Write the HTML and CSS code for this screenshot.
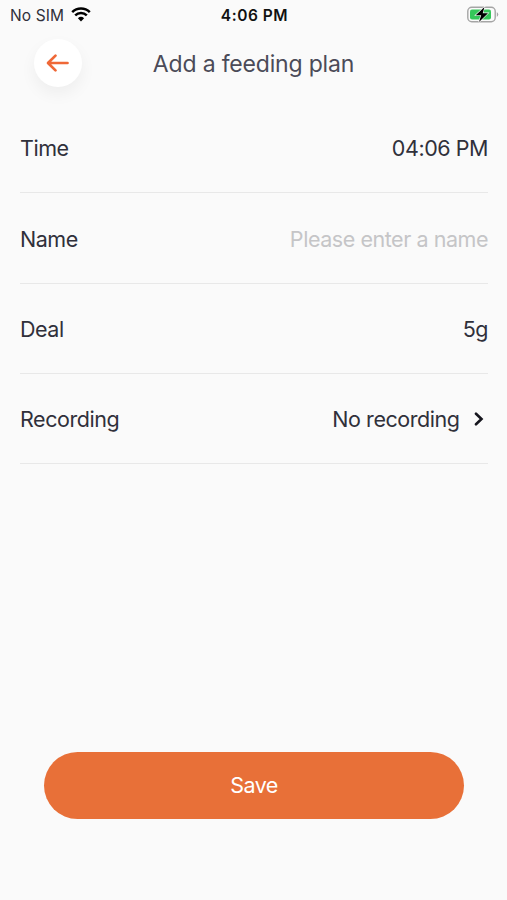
FILE: index.html
```html
<!DOCTYPE html>
<html lang="en">
<head>
<meta charset="utf-8">
<title>Add a feeding plan</title>
<link rel="stylesheet" href="styles.css">
</head>
<body>
<div class="status">
  <div class="carrier"><span>No SIM</span>
    <svg class="wifi" width="20" height="15" viewBox="0 0 20 15"><path d="M1.2 5.2a12.6 12.6 0 0 1 17.6 0M4.2 8.4a8.3 8.3 0 0 1 11.6 0" fill="none" stroke="#000" stroke-width="2.5"/><path d="M10 14.5 6.9 11.3a4.5 4.5 0 0 1 6.2 0z"/></svg>
  </div>
  <div class="clock">4:06 PM</div>
  <svg class="battery" width="32" height="18" viewBox="0 0 32 18"><rect x=".8" y="1.3" width="27.4" height="14.4" rx="4" fill="none" stroke="#a5a5a5" stroke-width="1.4"/><rect x="3" y="3.5" width="21" height="10" rx="2" fill="#35c759"/><path d="M29.8 6q3 2.5 0 5z" fill="#a5a5a5"/><path d="M17.5 1 8.7 9.2h5.5L12 16l9-8.8h-5.3z" stroke="#fafafa" stroke-width="1.2" paint-order="stroke"/></svg>
</div>
<header class="header">
  <button class="back" aria-label="Back"><svg width="24" height="20" viewBox="0 0 24 20"><path d="M21.5 10H2.5M9.5 2.6 2 10l7.5 7.4" fill="none" stroke="#ef6837" stroke-width="2.7" stroke-linecap="round" stroke-linejoin="round"/></svg></button>
  <h1 class="title">Add a feeding plan</h1>
</header>
<main class="form">
  <div class="row"><span>Time</span><span class="value">04:06 PM</span></div>
  <div class="row"><span>Name</span><span class="value hint">Please enter a name</span></div>
  <div class="row"><span>Deal</span><span class="value">5g</span></div>
  <div class="row"><span>Recording</span><span class="value">No recording</span><svg class="chevron" width="10" height="14" viewBox="0 0 10 14"><path d="m2 1.7 5.5 5.3L2 12.3" fill="none" stroke="#16161e" stroke-width="2.6" stroke-linecap="round"/></svg></div>
</main>
<button class="save">Save</button>
</body>
</html>
```

FILE: styles.css
```css
* { box-sizing: border-box; }
body { margin: 0; height: 900px; display: flex; flex-direction: column; background: #fafafa; color: #30303a; font-family: Inter, "Liberation Sans", sans-serif; overflow: hidden; }
button { border: 0; padding: 0; font: inherit; }
.status { height: 29px; display: grid; grid-template-columns: 1fr auto 1fr; align-items: center; padding: 1px 8px 0 10px; font-size: 15.5px; }
.carrier { display: flex; align-items: center; gap: 7px; letter-spacing: .1px; }
.wifi { margin-top: -1px; }
.clock { font-weight: 600; color: #111; letter-spacing: .55px; }
.battery { justify-self: end; }
.header { height: 74px; display: grid; grid-template-columns: 82px 1fr 82px; }
.back { width: 48px; height: 48px; margin: 10px 0 0 34px; border-radius: 50%; background: #fff; box-shadow: 0 7px 16px rgba(0,0,0,.05); display: flex; align-items: center; justify-content: center; }
.title { margin: 0; text-align: center; line-height: 70px; font-size: 23px; letter-spacing: -.18px; font-weight: 400; color: #4b4b58; white-space: nowrap; }
.form { padding: 0 19px 0 20px; }
.row { height: 90.3px; display: flex; align-items: center; border-bottom: 1px solid #e8e8e8; font-size: 21.5px; letter-spacing: -.45px; }
.row + .row { padding-top: 1.5px; }
.value { margin-left: auto; }
.hint { color: #c5c5c7; }
.chevron { margin: 0 4px 0 14.5px; }
.save { width: 420px; height: 67px; margin: 288px 0 0 44px; padding-bottom: 1px; border-radius: 34px; background: #e87038; color: #fff; font-size: 21.5px; letter-spacing: -.55px; }
```
